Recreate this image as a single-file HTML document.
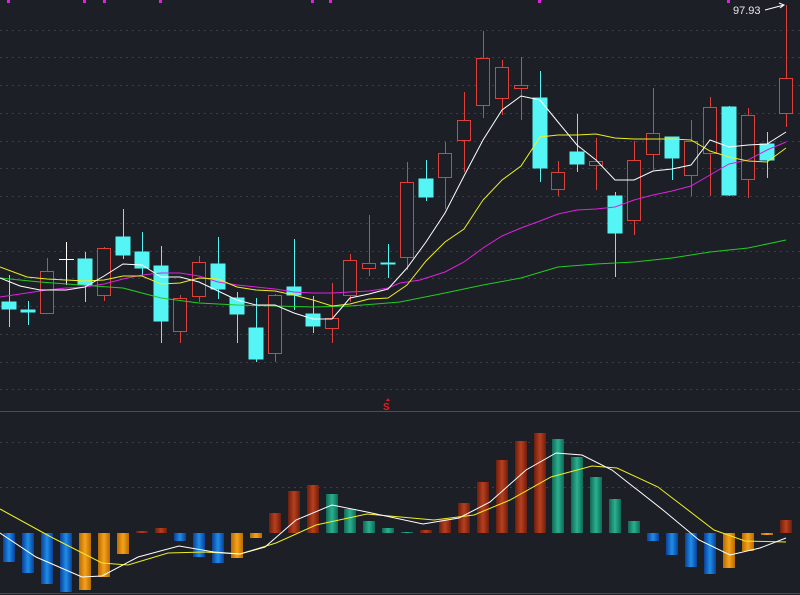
<!DOCTYPE html>
<html><head><meta charset="utf-8"><style>
html,body{margin:0;padding:0;background:#1c1f25;width:800px;height:595px;overflow:hidden}
svg{display:block}
</style></head><body>
<svg width="800" height="595" viewBox="0 0 800 595" xmlns="http://www.w3.org/2000/svg">
<defs>
<linearGradient id="gb" x1="0" x2="1"><stop offset="0" stop-color="#0a3f9a"/><stop offset=".5" stop-color="#1e8ee8"/><stop offset="1" stop-color="#0a3f9a"/></linearGradient>
<linearGradient id="go" x1="0" x2="1"><stop offset="0" stop-color="#b86a00"/><stop offset=".5" stop-color="#f5a31c"/><stop offset="1" stop-color="#b86a00"/></linearGradient>
<linearGradient id="gr" x1="0" x2="1"><stop offset="0" stop-color="#6e1d0c"/><stop offset=".5" stop-color="#b8401f"/><stop offset="1" stop-color="#6e1d0c"/></linearGradient>
<linearGradient id="gt" x1="0" x2="1"><stop offset="0" stop-color="#0d6a55"/><stop offset=".5" stop-color="#2bb090"/><stop offset="1" stop-color="#0d6a55"/></linearGradient>
</defs>
<rect width="800" height="595" fill="#1c1f25"/>
<g stroke="#3a3e46" stroke-width="1" stroke-dasharray="2,4">
<line x1="0" x2="800" y1="30.5" y2="30.5"/><line x1="0" x2="800" y1="57.5" y2="57.5"/><line x1="0" x2="800" y1="85.5" y2="85.5"/><line x1="0" x2="800" y1="113.5" y2="113.5"/><line x1="0" x2="800" y1="141.5" y2="141.5"/><line x1="0" x2="800" y1="168.5" y2="168.5"/><line x1="0" x2="800" y1="196.5" y2="196.5"/><line x1="0" x2="800" y1="223.5" y2="223.5"/><line x1="0" x2="800" y1="251.5" y2="251.5"/><line x1="0" x2="800" y1="278.5" y2="278.5"/><line x1="0" x2="800" y1="306.5" y2="306.5"/><line x1="0" x2="800" y1="334.5" y2="334.5"/><line x1="0" x2="800" y1="362.5" y2="362.5"/><line x1="0" x2="800" y1="389.5" y2="389.5"/>
<line x1="0" x2="800" y1="442.5" y2="442.5"/><line x1="0" x2="800" y1="487.5" y2="487.5"/>
</g>
<line x1="0" x2="800" y1="411.5" y2="411.5" stroke="#4a4e56"/>
<line x1="0" x2="800" y1="593.5" y2="593.5" stroke="#4a4e56"/>
<g fill="#e020e0"><rect x="7" y="0" width="3" height="3"/><rect x="83" y="0" width="3" height="3"/><rect x="103" y="0" width="3" height="3"/><rect x="159" y="0" width="3" height="3"/><rect x="311" y="0" width="3" height="3"/><rect x="329" y="0" width="3" height="3"/><rect x="538" y="0" width="3" height="3"/><rect x="727" y="0" width="3" height="3"/></g>

<!-- cyan candles -->
<g stroke="#55f5f5" fill="#55f5f5">
<line x1="9.5" x2="9.5" y1="275" y2="327"/><rect x="2" y="302" width="14" height="7"/>
<line x1="28.5" x2="28.5" y1="301" y2="325"/><rect x="21" y="310" width="14" height="2"/>
<line x1="85.5" x2="85.5" y1="252" y2="302"/><rect x="78" y="259" width="14" height="26"/>
<line x1="123.5" x2="123.5" y1="209" y2="259"/><rect x="116" y="237" width="14" height="18"/>
<line x1="142.5" x2="142.5" y1="232" y2="276"/><rect x="135" y="252" width="14" height="16"/>
<line x1="161.5" x2="161.5" y1="246" y2="343"/><rect x="154" y="266" width="14" height="55"/>
<line x1="218.5" x2="218.5" y1="237" y2="299"/><rect x="211" y="264" width="14" height="25"/>
<line x1="237.5" x2="237.5" y1="292" y2="343"/><rect x="230" y="298" width="14" height="16"/>
<line x1="256.5" x2="256.5" y1="298" y2="362"/><rect x="249" y="328" width="14" height="31"/>
<line x1="294.5" x2="294.5" y1="239" y2="310"/><rect x="287" y="287" width="14" height="8"/>
<line x1="313.5" x2="313.5" y1="296" y2="333"/><rect x="306" y="314" width="14" height="12"/>
<line x1="388.5" x2="388.5" y1="244" y2="278"/><rect x="381" y="263" width="14" height="1"/>
<line x1="426.5" x2="426.5" y1="160" y2="201"/><rect x="419" y="179" width="14" height="18"/>
<line x1="540.5" x2="540.5" y1="71" y2="182"/><rect x="533" y="98" width="14" height="70"/>
<line x1="577.5" x2="577.5" y1="114" y2="172"/><rect x="570" y="152" width="14" height="12"/>
<line x1="615.5" x2="615.5" y1="192" y2="277"/><rect x="608" y="196" width="14" height="37"/>
<line x1="672.5" x2="672.5" y1="137" y2="180"/><rect x="665" y="137" width="14" height="21"/>
<line x1="729.5" x2="729.5" y1="106" y2="196"/><rect x="722" y="107" width="14" height="88"/>
<line x1="767.5" x2="767.5" y1="132" y2="178"/><rect x="760" y="144" width="14" height="16"/>
</g>
<g stroke="#ffffff"><line x1="66.5" x2="66.5" y1="242" y2="285"/><line x1="59" x2="74" y1="259.5" y2="259.5"/></g>
<!-- red candles -->
<g stroke="#e0403a" fill="#1c1f25">
<line x1="47.5" x2="47.5" y1="258" y2="313"/><rect x="40.5" y="271.5" width="13" height="42"/>
<line x1="104.5" x2="104.5" y1="247" y2="301"/><rect x="97.5" y="248.5" width="13" height="47"/>
<line x1="180.5" x2="180.5" y1="295" y2="343"/><rect x="173.5" y="298.5" width="13" height="33"/>
<line x1="199.5" x2="199.5" y1="256" y2="302"/><rect x="192.5" y="262.5" width="13" height="34"/>
<line x1="275.5" x2="275.5" y1="294" y2="362"/><rect x="268.5" y="295.5" width="13" height="58"/>
<line x1="332.5" x2="332.5" y1="283" y2="343"/><rect x="325.5" y="318.5" width="13" height="10"/>
<line x1="350.5" x2="350.5" y1="254" y2="302"/><rect x="343.5" y="260.5" width="13" height="35"/>
<line x1="369.5" x2="369.5" y1="215" y2="276"/><rect x="362.5" y="263.5" width="13" height="5"/>
<line x1="407.5" x2="407.5" y1="162" y2="270"/><rect x="400.5" y="182.5" width="13" height="75"/>
<line x1="445.5" x2="445.5" y1="142" y2="209"/><rect x="438.5" y="153.5" width="13" height="24"/>
<line x1="464.5" x2="464.5" y1="92" y2="172"/><rect x="457.5" y="120.5" width="13" height="20"/>
<line x1="483.5" x2="483.5" y1="31" y2="118"/><rect x="476.5" y="58.5" width="13" height="47"/>
<line x1="502.5" x2="502.5" y1="60" y2="115"/><rect x="495.5" y="67.5" width="13" height="31"/>
<line x1="521.5" x2="521.5" y1="57" y2="120"/><rect x="514.5" y="85.5" width="13" height="3"/>
<line x1="558.5" x2="558.5" y1="161" y2="196"/><rect x="551.5" y="172.5" width="13" height="17"/>
<line x1="596.5" x2="596.5" y1="138" y2="190"/><rect x="589.5" y="161.5" width="13" height="4"/>
<line x1="634.5" x2="634.5" y1="141" y2="235"/><rect x="627.5" y="160.5" width="13" height="60"/>
<line x1="653.5" x2="653.5" y1="88" y2="170"/><rect x="646.5" y="133.5" width="13" height="21"/>
<line x1="691.5" x2="691.5" y1="120" y2="196"/><rect x="684.5" y="141.5" width="13" height="34"/>
<line x1="710.5" x2="710.5" y1="97" y2="196"/><rect x="703.5" y="107.5" width="13" height="46"/>
<line x1="748.5" x2="748.5" y1="108" y2="198"/><rect x="741.5" y="115.5" width="13" height="64"/>
<line x1="786.5" x2="786.5" y1="5" y2="127"/><rect x="779.5" y="78.5" width="13" height="35"/>
</g>
<!-- MAs -->
<g fill="none" stroke-width="1">
<polyline stroke="#22cc22" points="0,278 40,282 80,285 123,288 161,298 199,303 237,305 275,306 313,307 350,306 388,303 400,302 445,293 483,285 521,278 558,267 596,264 634,262 672,258 710,252 748,248 786,240"/>
<polyline stroke="#e020e0" points="0,297 27,293 47,290 66,288 85,287 104,284 123,279 142,275 161,273 180,273 199,276 218,282 237,285 256,287 275,289 294,292 313,293 332,293 350,292 369,291 388,288 400,283 420,280 445,272 464,262 483,248 502,236 521,228 540,221 558,214 577,210 596,209 615,207 634,200 653,195 672,191 691,186 710,175 729,164 748,160 767,150 786,142"/>
<polyline stroke="#eeee22" points="0,267 27,277 47,279 66,280 85,281 104,280 123,276 142,276 161,284 180,283 199,278 218,279 237,287 256,290 275,291 294,295 313,300 332,306 350,304 369,299 388,298 407,285 426,261 445,242 464,229 483,200 502,180 521,166 540,137 558,135 577,135 596,134 615,138 634,139 653,139 672,139 691,140 710,151 729,157 748,161 767,162 786,148"/>
<polyline stroke="#ffffff" points="0,278 20,286 40,290 66,290 85,287 104,276 123,264 142,265 161,277 180,277 199,282 218,291 237,300 256,305 275,305 294,313 313,319 332,319 350,298 369,294 388,289 407,268 426,242 445,213 464,176 483,140 502,110 521,96 540,100 558,122 577,145 596,160 615,180 634,180 653,171 672,169 691,165 710,140 729,147 748,145 767,144 786,132"/>
</g>
<text x="733" y="14" fill="#e8e8e8" font-family="Liberation Sans, sans-serif" font-size="11">97.93</text>
<path d="M765 10 L784 5 M779 3 L784 5 L780 8" stroke="#fff" fill="none" stroke-width="1"/>
<text x="383" y="410" fill="#e02020" font-family="Liberation Sans, sans-serif" font-size="10" font-weight="bold">S</text>
<path d="M386 401 L388 398 L390 401 Z" fill="#e02020"/>
<!-- MACD bars -->
<g>
<rect x="3" y="533" width="12" height="29" fill="url(#gb)"/>
<rect x="22" y="533" width="12" height="40" fill="url(#gb)"/>
<rect x="41" y="533" width="12" height="51" fill="url(#gb)"/>
<rect x="60" y="533" width="12" height="59" fill="url(#gb)"/>
<rect x="79" y="533" width="12" height="57" fill="url(#go)"/>
<rect x="98" y="533" width="12" height="44" fill="url(#go)"/>
<rect x="117" y="533" width="12" height="21" fill="url(#go)"/>
<rect x="136" y="531" width="12" height="2" fill="url(#gr)"/>
<rect x="155" y="528" width="12" height="5" fill="url(#gr)"/>
<rect x="174" y="533" width="12" height="8" fill="url(#gb)"/>
<rect x="193" y="533" width="12" height="24" fill="url(#gb)"/>
<rect x="212" y="533" width="12" height="30" fill="url(#gb)"/>
<rect x="231" y="533" width="12" height="25" fill="url(#go)"/>
<rect x="250" y="533" width="12" height="5" fill="url(#go)"/>
<rect x="269" y="513" width="12" height="20" fill="url(#gr)"/>
<rect x="288" y="491" width="12" height="42" fill="url(#gr)"/>
<rect x="307" y="485" width="12" height="48" fill="url(#gr)"/>
<rect x="326" y="494" width="12" height="39" fill="url(#gt)"/>
<rect x="344" y="509" width="12" height="24" fill="url(#gt)"/>
<rect x="363" y="521" width="12" height="12" fill="url(#gt)"/>
<rect x="382" y="528" width="12" height="5" fill="url(#gt)"/>
<rect x="401" y="532" width="12" height="1" fill="url(#gt)"/>
<rect x="420" y="530" width="12" height="3" fill="url(#gr)"/>
<rect x="439" y="519" width="12" height="14" fill="url(#gr)"/>
<rect x="458" y="503" width="12" height="30" fill="url(#gr)"/>
<rect x="477" y="482" width="12" height="51" fill="url(#gr)"/>
<rect x="496" y="460" width="12" height="73" fill="url(#gr)"/>
<rect x="515" y="441" width="12" height="92" fill="url(#gr)"/>
<rect x="534" y="433" width="12" height="100" fill="url(#gr)"/>
<rect x="552" y="439" width="12" height="94" fill="url(#gt)"/>
<rect x="571" y="457" width="12" height="76" fill="url(#gt)"/>
<rect x="590" y="477" width="12" height="56" fill="url(#gt)"/>
<rect x="609" y="499" width="12" height="34" fill="url(#gt)"/>
<rect x="628" y="521" width="12" height="12" fill="url(#gt)"/>
<rect x="647" y="533" width="12" height="8" fill="url(#gb)"/>
<rect x="666" y="533" width="12" height="22" fill="url(#gb)"/>
<rect x="685" y="533" width="12" height="34" fill="url(#gb)"/>
<rect x="704" y="533" width="12" height="41" fill="url(#gb)"/>
<rect x="723" y="533" width="12" height="35" fill="url(#go)"/>
<rect x="742" y="533" width="12" height="18" fill="url(#go)"/>
<rect x="761" y="533" width="12" height="2" fill="url(#go)"/>
<rect x="780" y="520" width="12" height="13" fill="url(#gr)"/>
</g>
<g fill="none" stroke-width="1">
<polyline stroke="#eeee22" points="0,509 51,537 102,563 128,565 168,553 204,552 240,554 276,543 316,525 367,514 434,520 474,515 510,500 551,477 592,466 617,468 658,487 714,530 745,541 786,542"/>
<polyline stroke="#ffffff" points="0,533 36,557 82,577 102,576 138,557 179,546 214,552 240,554 265,547 296,520 332,505 367,512 423,524 459,518 490,502 526,470 556,453 582,455 612,470 663,510 699,540 730,555 760,548 786,538"/>
</g>
</svg>
</body></html>
